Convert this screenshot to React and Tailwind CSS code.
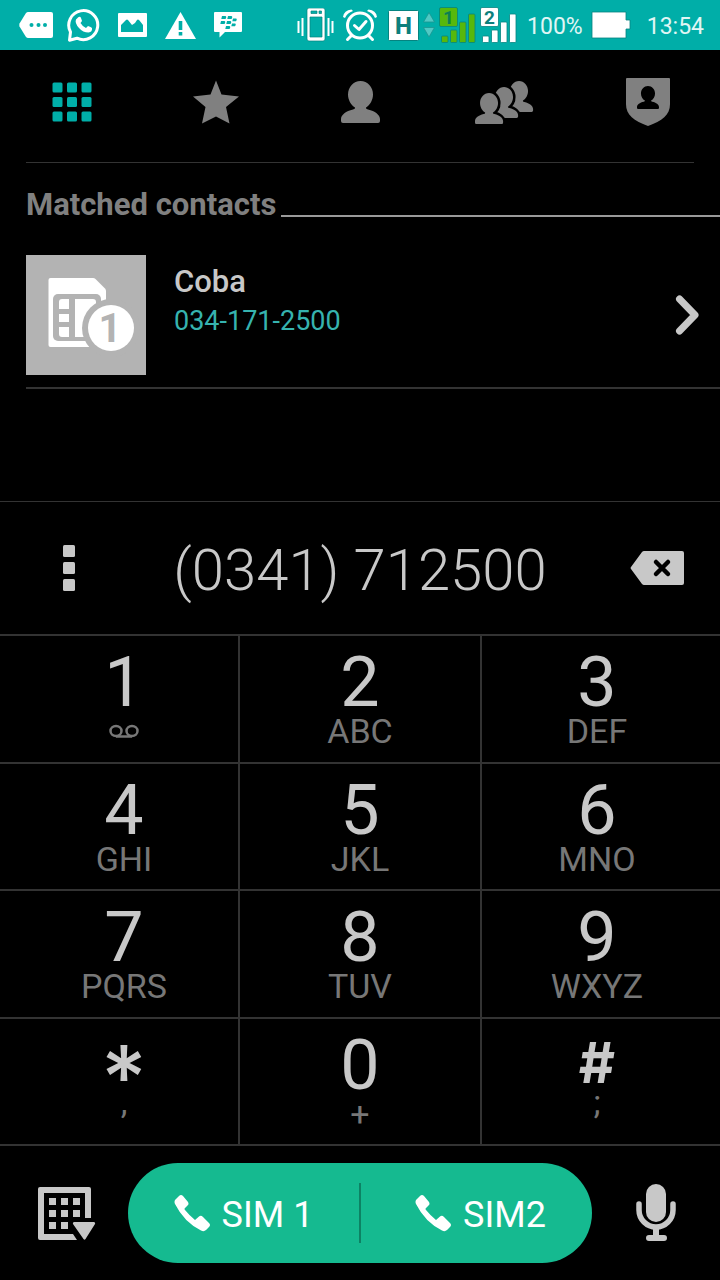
import React from "react";

const PERSON =
  "M19.5 0C26.500 0 32 6 32 13.500C32 19 29 24 25 26.500Q24.500 28 27 28.500C34 30 39 34 39 38V40Q39 42 37 42H2Q0 42 0 40V38C0 34 5 30 12 28.500Q14.500 28 14 26.500C10 24 7 19 7 13.500C7 6 12.500 0 19.500 0Z";

const HANDSET =
  "M1 5L5 1Q7 -1 9 1L14 7Q15 9 14 10L11 13Q10 14 11 15Q15 20 21 25L25 21.500Q27 20 29 22L35 28Q37 30 35 32L32 35Q30 37 27 35.500Q10 27 1 9Q0 7 1 5Z";

function StatusIcons() {
  return (
    <div className="flex" aria-label="Notifications">
      <span className="flex h-12 w-12 items-center justify-center">
        <svg width="34" height="26" viewBox="0 0 34 26">
          <path d="M9 0H32Q34 0 34 2V24Q34 26 32 26H9Q8 26 7 25L.5 14.500Q0 13 .5 11.500L7 1Q8 0 9 0Z" fill="#fff" />
          <g fill="#00aea8">
            <circle cx="12.500" cy="13" r="2" />
            <circle cx="19.500" cy="13" r="2" />
            <circle cx="26" cy="13" r="2" />
          </g>
        </svg>
      </span>
      <span className="flex h-12 w-12 items-center justify-center">
        <svg width="34" height="34" viewBox="0 0 34 34">
          <path d="M3.500 24A14.500 14.500 0 1 1 10 30.200L2.500 32.200Z" fill="none" stroke="#fff" strokeWidth="3" strokeLinejoin="round" />
          <path d="M11 9.500Q12 8.500 13.500 9Q14.500 11 15 13Q14 14.500 13.500 15Q15.500 18.500 19 20Q20 19 21 18Q24 19 25 20Q25.500 24 21.500 24.500Q16 24.500 12 20Q7.500 15 9 11.500Z" fill="#fff" />
        </svg>
      </span>
      <span className="flex h-12 w-12 items-center justify-center">
        <svg width="29" height="24" viewBox="0 0 29 24">
          <rect width="29" height="24" rx="1" fill="#fff" />
          <path d="M3 19V12L8 7Q9 6 10 7L14 12L17 10L19 7Q20 6 21.500 7.500L25 12V19Z" fill="#00aea8" />
        </svg>
      </span>
      <span className="flex h-12 w-12 items-center justify-center">
        <svg width="31" height="27" viewBox="0 0 31 27">
          <path d="M15.500 0L31 27H0Z" fill="#fff" />
          <path d="M13.700 9H17.300V18H13.700ZM13.700 20H17.300V23.500H13.700Z" fill="#00aea8" />
        </svg>
      </span>
      <span className="flex h-12 w-12 items-center justify-center">
        <svg width="28" height="26" viewBox="0 0 28 26">
          <path d="M1 0H27Q28 0 28 1V19Q28 20 27 20H11L5.500 25.500V20H1Q0 20 0 19V1Q0 0 1 0Z" fill="#fff" />
          <path
            d="M8 4H11.500Q13 4.500 11.500 7H7.300ZM14 4H17.500Q19 4.500 17.500 7H13.300ZM7 9H10.500Q12 9.500 10.500 12H6.300ZM13 9H16.500Q18 9.500 16.500 12H12.300ZM19 6.500H22Q23.500 7 22 9.300H18.300ZM18 11.500H21Q22.500 12 21 14.300H17.300ZM12 14H15.500Q17 14.500 15.500 17H11.300Z"
            fill="#00aea8"
          />
        </svg>
      </span>
    </div>
  );
}

function Signal({ digit, color, ink }) {
  return (
    <svg width="37" height="38" viewBox="0 0 37 38">
      <g fill={color} stroke="#058480" strokeWidth=".8">
        <rect x=".5" y="1.500" width="18" height="19" rx="1.500" />
        <rect x="2.500" y="30" width="6.500" height="6.500" rx="1" />
        <rect x="11.500" y="24" width="6.500" height="12.500" rx="1" />
        <rect x="20.500" y="16" width="6.500" height="20.500" rx="1" />
        <rect x="29.500" y="8" width="6.500" height="28.500" rx="1" />
      </g>
      <text x="9.500" y="17.500" textAnchor="middle" fontFamily="Roboto, sans-serif" fontWeight="700" fontSize="19" fill={ink}>
        {digit}
      </text>
    </svg>
  );
}

function SystemIcons() {
  return (
    <div className="flex items-center text-[23px] text-[#e0f6f5]">
      <svg className="mr-2" width="37" height="34" viewBox="0 0 37 34">
        <path fillRule="evenodd" d="M12 0H26Q28 0 28 2V31Q28 33 26 33H12Q10 33 10 31V2Q10 0 12 0ZM13 9V29H25V9ZM14 3V5.500H20V3ZM22 3V5.500H24.500V3Z" fill="#fff" stroke="#058480" strokeWidth=".7" />
        <path d="M1.500 13V25M5.500 10V28M31.500 10V28M35.500 13V25" stroke="#fff" strokeWidth="2" />
      </svg>
      <svg className="mr-2.5" width="36" height="34" viewBox="0 0 36 34">
        <g fill="none" stroke="#fff" strokeWidth="3" strokeLinecap="round" strokeLinejoin="round">
          <circle cx="18" cy="17.500" r="12.500" />
          <path d="M12.500 17.500L17 21.500L24 13.500M9 28L5.500 31.500M27 28L30.500 31.500" />
        </g>
        <path d="M1 9Q2 2 9.500 1.500L11 3Q5 5 3 10ZM35 9Q34 2 26.500 1.500L25 3Q31 5 33 10Z" fill="#fff" />
      </svg>
      <svg className="mr-1" width="31" height="31" viewBox="0 0 31 31">
        <rect x=".5" y=".5" width="30" height="30" rx="1" fill="#fff" stroke="#058480" />
        <text x="15.500" y="24" textAnchor="middle" fontFamily="Roboto, sans-serif" fontWeight="800" fontSize="24" fill="#0d7f7c">
          H
        </text>
      </svg>
      <svg className="mr-1" width="12" height="26" viewBox="0 0 12 26">
        <path d="M6 .5L11.500 10H.5ZM6 25L11.500 15.500H.5Z" fill="#4fc9c4" stroke="#1b9591" strokeWidth=".8" />
      </svg>
      <span className="mr-1 flex">
        <Signal digit="1" color="#57b80c" ink="#0c7f52" />
      </span>
      <Signal digit="2" color="#ffffff" ink="#0d7f7c" />
      <span className="ml-2.5 pt-1">100%</span>
      <svg className="ml-2" width="40" height="28" viewBox="0 0 40 28">
        <path d="M1 1H35V9H39V18H35V27H1Z" fill="#fff" stroke="#058480" strokeWidth=".8" />
      </svg>
      <time className="ml-4 pt-1">13:54</time>
    </div>
  );
}

function Tabs() {
  const tab = "flex items-center justify-center";
  return (
    <nav className="grid h-[104px] grid-cols-5 text-[#808080]">
      <button className={tab} aria-label="Keypad">
        <svg width="40" height="40" viewBox="0 0 40 40" fill="#00aea8">
          {[0, 14.5, 29].map((y) =>
            [0, 14.5, 29].map((x) => <rect key={x + "-" + y} x={x + 0.5} y={y + 0.5} width="10" height="10" rx="1.500" />)
          )}
        </svg>
      </button>
      <button className={tab} aria-label="Favorites">
        <svg width="46" height="44" viewBox="0 0 46 43" fill="currentColor">
          <path d="M23 0L28.500 14L46 16L33 26.500L36.500 43L23 36L9 43L12.500 26.500L0 16L17.500 14Z" />
        </svg>
      </button>
      <button className={tab} aria-label="Contacts">
        <svg width="39" height="42" viewBox="0 0 39 42" fill="currentColor">
          <path d={PERSON} />
        </svg>
      </button>
      <button className={tab} aria-label="Groups">
        <svg width="60" height="44" viewBox="0 0 60 44" fill="currentColor" stroke="#000" strokeWidth="7" paintOrder="stroke">
          <path d={PERSON} transform="translate(31 1) scale(.72 .74)" />
          <path d={PERSON} transform="translate(16 7) scale(.72 .74)" />
          <path d={PERSON} transform="translate(1 13) scale(.72 .74)" />
        </svg>
      </button>
      <button className={tab} aria-label="VIP">
        <svg width="44" height="48" viewBox="0 0 44 48">
          <path d="M1 0H43Q44 0 44 1V26C44 37 36 43 22 48C8 43 0 37 0 26V1Q0 0 1 0Z" fill="currentColor" />
          <path d={PERSON} transform="translate(11 8) scale(.564 .55)" fill="#000" />
        </svg>
      </button>
    </nav>
  );
}

function SimAvatar() {
  return (
    <svg className="shrink-0 bg-[#b3b3b3]" width="120" height="120" viewBox="0 0 120 120">
      <path d="M24.500 23H67Q68.500 23 69.500 24L79 33.500Q80 34.500 80 36V92H24.500Q22.500 92 22.500 90V25Q22.500 23 24.500 23Z" fill="#fff" />
      <rect x="27" y="39" width="48" height="47" rx="5" fill="#b3b3b3" />
      <path d="M36 44H43V54H33V47Q33 44 36 44ZM33 59H43V67H33ZM33 72H43V82H36Q33 82 33 79ZM49 44H67Q70 44 70 47V82H49Z" fill="#fff" />
      <circle cx="85" cy="73" r="29" fill="#b3b3b3" />
      <circle cx="85" cy="73" r="23" fill="#fff" />
      <text x="84" y="87" textAnchor="middle" fontFamily="Roboto, sans-serif" fontWeight="700" fontSize="40" fill="#b3b3b3">
        1
      </text>
    </svg>
  );
}

const KEYS = [
  ["1", null],
  ["2", "ABC"],
  ["3", "DEF"],
  ["4", "GHI"],
  ["5", "JKL"],
  ["6", "MNO"],
  ["7", "PQRS"],
  ["8", "TUV"],
  ["9", "WXYZ"],
  ["*", ","],
  ["0", "+"],
  ["#", ";"],
];

const COLUMN = ["border-r-2 pl-2.5", "", "border-l-2 pr-2"];

function digitClass(digit) {
  if (digit === "*") return "h-16 font-[Inter] text-[88px] leading-[88px] font-medium";
  if (digit === "#") return "h-16 font-[Inter] text-[56px] leading-[60px] font-bold";
  return "h-16 text-[70px] leading-[64px]";
}

function lettersClass(letters) {
  const lowMark = letters === "," || letters === ";";
  return "text-[34px] text-[#777] " + (lowMark ? "leading-[10px]" : "leading-[34px]");
}

function Keypad() {
  return (
    <div className="grid h-[510px] grid-cols-3 grid-rows-4">
      {KEYS.map(([digit, letters], i) => (
        <button key={digit} className={"flex flex-col items-center border-t-2 border-[#333] pt-3.5 " + COLUMN[i % 3]}>
          <span className={digitClass(digit)}>{digit}</span>
          {letters ? (
            <span className={lettersClass(letters)}>{letters}</span>
          ) : (
            <svg className="mt-2.5" width="30" height="15" viewBox="0 0 30 15" fill="none" stroke="#777" strokeWidth="2.500" aria-label="Voicemail">
              <ellipse cx="7" cy="7" rx="5.500" ry="5" />
              <ellipse cx="23" cy="7" rx="5.500" ry="5" />
              <path d="M7 12.500H23" />
            </svg>
          )}
        </button>
      ))}
    </div>
  );
}

function CallButton({ label, className }) {
  return (
    <button className={"flex items-center justify-center gap-3 text-4xl text-white " + className}>
      <svg width="36" height="37" viewBox="0 0 36 37" fill="currentColor">
        <path d={HANDSET} />
      </svg>
      <span className="pt-1">{label}</span>
    </button>
  );
}

export default function App() {
  return (
    <div className="flex min-h-screen flex-col bg-black font-[Roboto,sans-serif] text-[#c8c8c8]">
      <header className="flex h-[50px] items-center justify-between bg-[#00aea8] pr-4 pl-3">
        <StatusIcons />
        <SystemIcons />
      </header>

      <Tabs />
      <hr className="mx-[26px] mt-2 border-[#333]" />

      <main className="flex-1 pl-[26px]">
        <div className="flex items-end gap-[5px] pt-6">
          <h1 className="text-[31px] leading-9 font-bold text-[#808080]">Matched contacts</h1>
          <span className="mb-1.5 h-0.5 flex-1 bg-[#999]" />
        </div>
        <a href="#coba" className="mt-8 flex border-b-2 border-[#333] pb-3">
          <SimAvatar />
          <span className="flex flex-1 flex-col pt-[9px] pl-7">
            <span className="text-[31px] leading-9 font-medium">Coba</span>
            <span className="mt-[3px] text-[27px] leading-9 text-[#36b3af]">034-171-2500</span>
          </span>
          <svg className="mr-5 self-center" width="26" height="40" viewBox="0 0 26 40" fill="none" stroke="#c8c8c8" strokeWidth="7" strokeLinecap="round" strokeLinejoin="round">
            <path d="M5.500 4L21 20L5.500 36" />
          </svg>
        </a>
      </main>

      <section>
        <div className="flex h-[133px] items-center border-t border-[#333] pr-9 pl-[60px]">
          <button className="flex w-[18px] justify-center" aria-label="More options">
            <svg width="12" height="46" viewBox="0 0 12 46" fill="currentColor">
              <rect width="12" height="12" rx="1.500" />
              <rect y="17" width="12" height="12" rx="1.500" />
              <rect y="34" width="12" height="12" rx="1.500" />
            </svg>
          </button>
          <input
            className="ml-4 min-w-0 flex-1 bg-transparent pt-1 text-center text-[58px] leading-[72px] font-light outline-none"
            type="tel"
            aria-label="Phone number"
            defaultValue="(0341) 712500"
          />
          <button className="ml-1" aria-label="Delete">
            <svg width="54" height="34" viewBox="0 0 54 34">
              <path d="M14 0H52Q54 0 54 2V32Q54 34 52 34H14Q13 34 12 33L1 18Q0 17 1 16L12 1Q13 0 14 0Z" fill="currentColor" />
              <path d="M26 11L38 23M38 11L26 23" stroke="#000" strokeWidth="4.500" strokeLinecap="round" />
            </svg>
          </button>
        </div>
        <Keypad />
        <footer className="flex h-[136px] items-center border-t-2 border-[#333] pr-11 pl-[38px]">
          <button className="w-[90px]" aria-label="Hide keypad">
            <svg width="58" height="53" viewBox="0 0 58 53" fill="currentColor">
              <path fillRule="evenodd" d="M2 0H51Q53 0 53 2V31H47V6H6V47H35L39 53H2Q0 53 0 51V2Q0 0 2 0Z" />
              <path d="M11 11H18V18H11ZM23 11H30V18H23ZM35 11H42V18H35ZM11 23H18V30H11ZM23 23H30V30H23ZM35 23H42V30H35ZM11 35H18V42H11ZM23 35H30V42H23Z" />
              <path d="M36 35H56Q57.500 35.500 57 37L47.500 52Q46.500 53.500 45.500 52L35 37Q34.500 35.500 36 35Z" />
            </svg>
          </button>
          <div className="grid h-[100px] flex-1 grid-cols-[1fr_2px_1fr] items-center overflow-hidden rounded-full bg-[#15ba90]">
            <CallButton label="SIM 1" className="h-full" />
            <span className="h-[60px] bg-[#0d8264]" />
            <CallButton label="SIM2" className="h-full pl-2" />
          </div>
          <button className="ml-11" aria-label="Voice search">
            <svg width="40" height="58" viewBox="0 0 40 58">
              <rect x="10" width="20" height="38" rx="10" fill="currentColor" />
              <path d="M3 20V26A17 17 0 0 0 37 26V20" fill="none" stroke="currentColor" strokeWidth="5.500" strokeLinecap="round" />
              <path d="M20 44V54M13 54H28" fill="none" stroke="currentColor" strokeWidth="6" strokeLinecap="round" />
            </svg>
          </button>
        </footer>
      </section>
    </div>
  );
}
